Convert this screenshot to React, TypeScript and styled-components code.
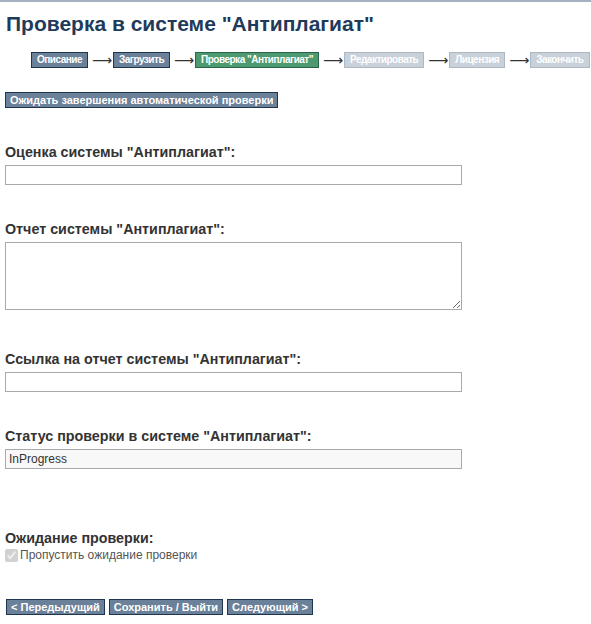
import React from "react";
import styled, { createGlobalStyle } from "styled-components";

const GlobalStyle = createGlobalStyle`
    html, body {
        margin: 0;
        padding: 0;
        background: #ffffff;
    }
    body {
        font-family: "Liberation Sans", Arial, sans-serif;
        color: #333333;
    }
`;

type StepState = "done" | "current" | "todo";

const steps: { title: string; state: StepState }[] = [
    { title: "Описание", state: "done" },
    { title: "Загрузить", state: "done" },
    { title: 'Проверка "Антиплагиат"', state: "current" },
    { title: "Редактировать", state: "todo" },
    { title: "Лицензия", state: "todo" },
    { title: "Закончить", state: "todo" },
];

const App: React.FC = () => {
    return (
        <Page>
            <GlobalStyle />
            <Title>Проверка в системе "Антиплагиат"</Title>
            <Progress>
                {steps.map((step, i) => (
                    <React.Fragment key={step.title}>
                        {i > 0 && <Arrow>⟶</Arrow>}
                        <StepButton $state={step.state}>{step.title}</StepButton>
                    </React.Fragment>
                ))}
            </Progress>
            <ActionButton>Ожидать завершения автоматической проверки</ActionButton>

            <Field>
                <Label>Оценка системы "Антиплагиат":</Label>
                <TextInput type="text" />
            </Field>
            <Field>
                <Label>Отчет системы "Антиплагиат":</Label>
                <TextArea />
            </Field>
            <Field $gap={41}>
                <Label>Ссылка на отчет системы "Антиплагиат":</Label>
                <TextInput type="text" />
            </Field>
            <Field>
                <Label>Статус проверки в системе "Антиплагиат":</Label>
                <TextInput type="text" readOnly value="InProgress" $readonly />
            </Field>
            <Field $gap={61}>
                <Label>Ожидание проверки:</Label>
                <CheckRow>
                    <input type="checkbox" checked disabled readOnly />
                    Пропустить ожидание проверки
                </CheckRow>
            </Field>

            <Footer>
                <ActionButton>&lt; Передыдущий</ActionButton>
                <ActionButton>Сохранить / Выйти</ActionButton>
                <ActionButton>Следующий &gt;</ActionButton>
            </Footer>
        </Page>
    );
};

export default App;

const Page = styled.div`
    border-top: 2px solid #a3b1c1;
    padding: 0 5px 20px 5px;
`;

const Title = styled.h1`
    margin: 9px 0 0 1px;
    font-size: 21px;
    line-height: 26px;
    font-weight: bold;
    color: #1f3b5b;
`;

const Progress = styled.div`
    display: flex;
    align-items: center;
    gap: 4px;
    margin: 15px 0 0 26px;
`;

const Arrow = styled.span`
    flex-shrink: 0;
    font-family: "DejaVu Sans", sans-serif;
    font-size: 14px;
    color: #333;
    line-height: 16px;
    width: 17px;
    text-align: center;
`;

const stepColors: Record<StepState, { bg: string; border: string }> = {
    done: { bg: "#6b8099", border: "#1f3550" },
    current: { bg: "#4d9a70", border: "#2a6446" },
    todo: { bg: "#c8d0d9", border: "#aeb8c4" },
};

const StepButton = styled.span<{ $state: StepState }>`
    flex-shrink: 0;
    white-space: nowrap;
    box-sizing: border-box;
    height: 16px;
    padding: 0 5px;
    font-size: 10px;
    letter-spacing: -0.5px;
    line-height: 14px;
    font-weight: bold;
    color: #ffffff;
    background: ${({ $state }) => stepColors[$state].bg};
    border: 1px solid ${({ $state }) => stepColors[$state].border};
`;

const ActionButton = styled.button`
    box-sizing: border-box;
    height: 16px;
    padding: 0 4px;
    font-family: "Liberation Sans", Arial, sans-serif;
    font-size: 11px;
    line-height: 14px;
    font-weight: bold;
    color: #ffffff;
    background: #6b8099;
    border: 1px solid #1f3550;
    border-radius: 0;
    cursor: pointer;
    margin-top: 24px;
`;

const Field = styled.div<{ $gap?: number }>`
    margin-top: ${({ $gap }) => $gap ?? 36}px;
    display: flex;
    flex-direction: column;
    align-items: flex-start;
`;

const Label = styled.label`
    font-size: 14.3px;
    line-height: 16px;
    font-weight: bold;
    color: #333333;
    margin-bottom: 5px;
`;

const TextInput = styled.input<{ $readonly?: boolean }>`
    box-sizing: border-box;
    width: 457px;
    height: 20px;
    margin: 0;
    padding: 1px 3px;
    font-family: "Liberation Sans", Arial, sans-serif;
    font-size: 12px;
    color: #333;
    border: 1px solid #a9a9a9;
    border-radius: 0;
    background: ${({ $readonly }) => ($readonly ? "#f8f8f8" : "#ffffff")};
    outline: none;
`;

const TextArea = styled.textarea`
    box-sizing: border-box;
    width: 457px;
    height: 68px;
    margin: 0;
    border: 1px solid #a9a9a9;
    border-radius: 0;
    font-family: "Liberation Sans", Arial, sans-serif;
`;

const CheckRow = styled.label`
    display: flex;
    align-items: center;
    gap: 2px;
    font-size: 12px;
    color: #555;
    margin-top: -3px;

    input {
        margin: 0;
        width: 13px;
        height: 13px;
    }
`;

const Footer = styled.div`
    display: flex;
    gap: 4px;
    margin-top: 37px;
    margin-left: 1px;

    button {
        margin-top: 0;
    }
`;
